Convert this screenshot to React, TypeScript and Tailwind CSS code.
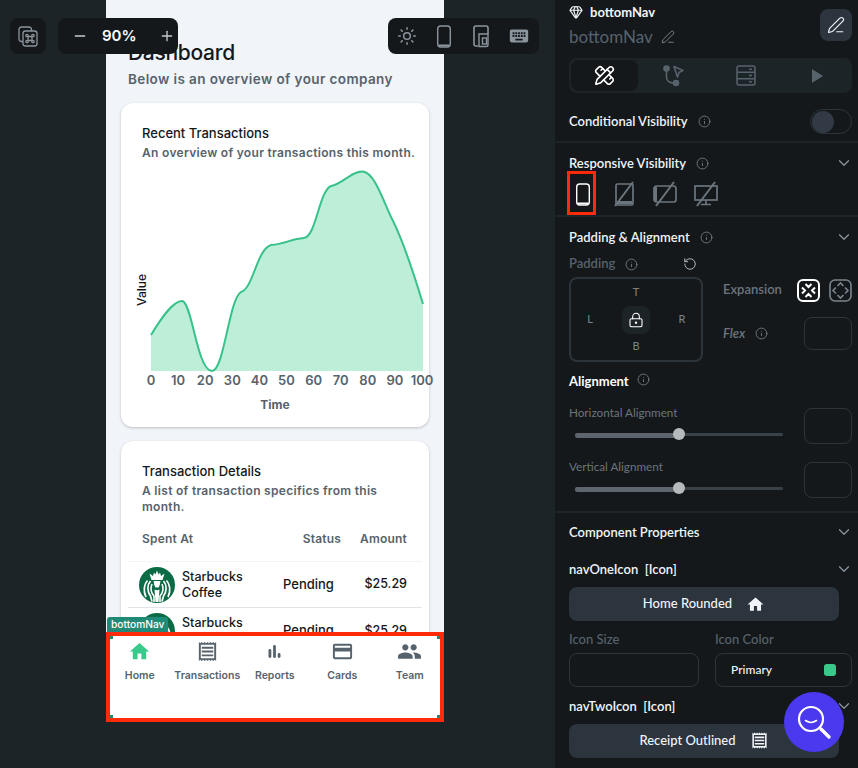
import { ChevronDown, Gem, Info, LockKeyhole, Minus, PencilRuler, PenLine, Plus, RotateCcw, Sun } from 'lucide-react';
import { MdCreditCard, MdHome, MdKeyboard, MdOutlineReceipt, MdPeople, MdPlayArrow } from 'react-icons/md';
import type { ReactNode } from 'react';

const NAV_ITEMS = [
  { label: 'Home', icon: <MdHome size={23} />, active: true },
  { label: 'Transactions', icon: <MdOutlineReceipt size={23} /> },
  { label: 'Reports', icon: <BarsIcon /> },
  { label: 'Cards', icon: <MdCreditCard size={23} /> },
  { label: 'Team', icon: <MdPeople size={25} /> },
];

const TICKS = [0, 10, 20, 30, 40, 50, 60, 70, 80, 90, 100];

const LINE =
  'M30 164 C41 146 52 130 61 130 C71 130 76 200 91 200 C103 200 108 128 120 121 C132 118 136 78 150 74 C164 73 170 68 183 67 C195 66 198 20 210 15 C222 13 230 0 242 0.5 C254 2 262 30 272 50 C282 70 292 100 302 133';

function BarsIcon() {
  return (
    <svg width="23" height="23" viewBox="0 0 23 23" fill="currentColor">
      <rect x="5.5" y="9" width="2.8" height="9" rx="1.4" />
      <rect x="10.1" y="5" width="2.8" height="13" rx="1.4" />
      <rect x="14.7" y="13" width="2.8" height="5" rx="1.4" />
    </svg>
  );
}

function PhoneGlyph({ className }: { className?: string }) {
  return (
    <svg width="18" height="25" viewBox="0 0 18 25" fill="none" stroke="currentColor" strokeWidth="1.4" className={className}>
      <rect x="2.7" y="2" width="12.6" height="21" rx="3" />
      <path d="M3.5 21.4 H14.5" strokeWidth="1.8" />
    </svg>
  );
}

function TabletGlyph() {
  return (
    <svg width="18" height="24" viewBox="0 0 18 24" fill="none" stroke="currentColor" strokeWidth="1.6">
      <path d="M6 22 H4 a2 2 0 0 1 -2 -2 V4 a2 2 0 0 1 2 -2 H14 a2 2 0 0 1 2 2 V10" />
      <path d="M7 10 H16 V21 a1.5 1.5 0 0 1 -1.5 1.5 H7 Z" strokeWidth="1.4" />
      <rect x="10.5" y="14" width="4" height="6" strokeWidth="1.4" />
    </svg>
  );
}

function FlowGlyph() {
  return (
    <svg width="22" height="22" viewBox="0 0 22 22" fill="none" stroke="currentColor" strokeWidth="1.6">
      <circle cx="3.5" cy="3.5" r="2.5" fill="currentColor" />
      <circle cx="13" cy="18" r="2.5" fill="currentColor" />
      <path d="M3.5 5 V12 C3.5 16 7 18 11 18" />
      <path d="M11 1.5 L20 5.5 L16 7.5 L14.5 12 Z" strokeLinejoin="round" />
    </svg>
  );
}

function ServerGlyph() {
  return (
    <svg width="20" height="21" viewBox="0 0 20 21" fill="none" stroke="currentColor" strokeWidth="1.5">
      <rect x="1" y="1" width="18" height="19" rx="2" />
      <path d="M1 7.3 H19 M1 13.7 H19" />
      <path d="M13 4.2 H16 M13 10.5 H16 M13 16.8 H16" />
    </svg>
  );
}

function CommandStack() {
  return (
    <svg width="20" height="21" viewBox="0 0 20 21" fill="none" stroke="#8b959e" strokeWidth="1.3">
      <path d="M5 15.5 H3.5 a2.5 2.5 0 0 1 -2.5 -2.5 V3.5 A2.5 2.5 0 0 1 3.5 1 H11 a2.5 2.5 0 0 1 2.5 2.5 V5" />
      <rect x="5" y="5" width="14" height="15" rx="2.5" />
      <path d="M10 10 V15 M14 10 V15 M10 10.5 H14 M10 14.5 H14" />
      <circle cx="9" cy="9.5" r="1.2" />
      <circle cx="15" cy="9.5" r="1.2" />
      <circle cx="9" cy="15.5" r="1.2" />
      <circle cx="15" cy="15.5" r="1.2" />
    </svg>
  );
}

function HiddenDevice({ kind }: { kind: 'tablet' | 'landscape' | 'desktop' }) {
  return (
    <svg width="26" height="26" viewBox="0 0 26 26" fill="none" stroke="#6b757e" strokeWidth="1.7">
      {kind === 'tablet' && <rect x="5" y="3" width="17" height="21" rx="1.5" />}
      {kind === 'tablet' && <path d="M6 21.5 H21" strokeWidth="3" />}
      {kind === 'landscape' && <rect x="2" y="5" width="22" height="16" rx="2.5" />}
      {kind === 'landscape' && <path d="M3.5 6 V20" strokeWidth="3" />}
      {kind === 'desktop' && <rect x="2" y="5" width="22" height="14" />}
      {kind === 'desktop' && <path d="M13 19 V23 M8 23.5 H18" />}
      <path d="M4 25 L22 1" strokeWidth="2" />
    </svg>
  );
}

function ExpandGlyph({ inward }: { inward?: boolean }) {
  return (
    <svg
      width="23"
      height="23"
      viewBox="0 0 23 23"
      fill="none"
      stroke={inward ? '#ffffff' : '#7b858e'}
      strokeWidth={inward ? 2 : 1.6}
    >
      <rect x="1" y="1" width="21" height="21" rx="5" />
      {inward ? (
        <path d="M8.5 5 L11.5 8 L14.5 5 M8.5 18 L11.5 15 L14.5 18 M5 8.5 L8 11.5 L5 14.5 M18 8.5 L15 11.5 L18 14.5" />
      ) : (
        <path d="M8.5 7 L11.5 4 L14.5 7 M8.5 16 L11.5 19 L14.5 16 M7 8.5 L4 11.5 L7 14.5 M16 8.5 L19 11.5 L16 14.5" />
      )}
    </svg>
  );
}

function StarbucksLogo() {
  return (
    <svg width="36" height="36" viewBox="0 0 36 36" className="shrink-0">
      <circle cx="18" cy="18" r="18" fill="#0b6b45" />
      {/* crown */}
      <path d="M10.5 6.5 L14 9 L15 5.5 L16.5 7.5 L18 3.5 L19.5 7.5 L21 5.5 L22 9 L25.500 6.5 L23.500 13 H12.500 Z" fill="#ffffff" />
      {/* face */}
      <path d="M14.500 14 H21.500 L21 19 C20 21 16 21 15 19 Z" fill="#ffffff" />
      <path d="M14 14 C12.500 17 13 21 15 23 L16 20 Z M22 14 C23.500 17 23 21 21 23 L20 20 Z" fill="#0b6b45" />
      {/* body */}
      <path d="M15.500 22.500 C17 23.500 19 23.500 20.500 22.500 L19.500 35 H16.500 Z" fill="#ffffff" />
      {/* tails */}
      <path d="M11.500 14 C8 18 8 24 11.500 29 L13 34.500 M8.500 13.500 C5 17 4 24 7 30 M24.500 14 C28 18 28 24 24.500 29 L23 34.500 M27.500 13.500 C31 17 32 24 29 30" fill="none" stroke="#ffffff" strokeWidth="1.7" />
      <path d="M13 17 C11 21 12 26 15 29 L15 35 M23 17 C25 21 24 26 21 29 L21 35" fill="none" stroke="#ffffff" strokeWidth="1.6" />
    </svg>
  );
}

function Chart() {
  return (
    <svg width="308" height="260" viewBox="0 0 308 260" className="block overflow-visible">
      <g transform="translate(0 10)">
        <path d={`${LINE} V200 H30 Z`} fill="#bdeed8" />
        <path d={LINE} fill="none" stroke="#39c18a" strokeWidth="2" />
      </g>
      <text
        transform="translate(25 129) rotate(-90)"
        fontSize="12"
        fontWeight="500"
        fill="#14181b"
        textAnchor="middle"
      >
        Value
      </text>
      {TICKS.map((t, i) => (
        <text key={t} x={30 + i * 27.1} y="224" fontSize="13" fontWeight="600" fill="#57636c" textAnchor="middle">
          {t}
        </text>
      ))}
      <text x="154" y="248" fontSize="12" fontWeight="700" fill="#57636c" textAnchor="middle">
        Time
      </text>
    </svg>
  );
}

function TxRow({ border }: { border?: boolean }) {
  return (
    <div className={`flex h-[46px] items-center pl-[11px] pr-[15px] ${border ? 'border-b border-[#e0e3e7]' : ''}`}>
      <StarbucksLogo />
      <div className="ml-[7px] w-[101px] text-[12.5px] leading-[16px] font-medium text-[#14181b]">
        Starbucks
        <br />
        Coffee
      </div>
      <div className="w-[75px] text-[13px] font-medium text-[#14181b]">Pending</div>
      <div className="ml-auto text-[12.5px] font-medium text-[#14181b]">$25.29</div>
    </div>
  );
}

function Phone() {
  return (
    <div className="flex h-[722px] w-[338px] flex-col bg-[#f1f4f8]" style={{ fontFamily: 'Inter, sans-serif' }}>
      <div className="h-[632px] overflow-hidden">
        <div className="pl-[22px] pt-[38px]">
          <div className="text-[21px] leading-[30px] font-medium tracking-[-0.3px] text-[#14181b]">Dashboard</div>
          <div className="mt-[2px] text-[13.5px] leading-[18px] font-semibold tracking-[0.4px] text-[#57636c]">
            Below is an overview of your company
          </div>
        </div>
        <div className="mx-[15px] mt-[15px] h-[324px] rounded-xl bg-white shadow-[0_1px_3px_rgba(0,0,0,0.22)]">
          <div className="px-[21px] pt-[22px]">
            <div className="text-[13px] leading-[16px] font-medium text-[#14181b]">Recent Transactions</div>
            <div className="mt-[4px] text-[12px] leading-[16px] font-semibold tracking-[0.3px] whitespace-nowrap text-[#57636c]">
              An overview of your transactions this month.
            </div>
          </div>
          <Chart />
        </div>
        <div className="mx-[15px] mt-[14px] h-[230px] rounded-xl bg-white shadow-[0_1px_3px_rgba(0,0,0,0.22)]">
          <div className="px-[21px] pt-[22px]">
            <div className="text-[13px] leading-[16px] font-medium text-[#14181b]">Transaction Details</div>
            <div className="mt-[4px] text-[12px] leading-[16px] font-semibold tracking-[0.3px] text-[#57636c]">
              A list of transaction specifics from this month.
            </div>
            <div className="mt-[15px] flex text-[12px] font-semibold tracking-[0.2px] text-[#57636c]">
              <span className="flex-1">Spent At</span>
              <span className="mr-[19px]">Status</span>
              <span className="mr-[1px]">Amount</span>
            </div>
          </div>
          <div className="mx-[7px] mt-[13px] border-t border-[#f1f4f8]">
            <TxRow border />
            <TxRow />
          </div>
        </div>
      </div>
      <div className="relative flex h-[90px] bg-white">
        {NAV_ITEMS.map((item) => (
          <div key={item.label} className="flex w-[67.5px] flex-col items-center pt-[7px]">
            <div className={`flex h-[24px] items-center ${item.active ? 'text-[#39c98a]' : 'text-[#57636c]'}`}>
              {item.icon}
            </div>
            <span className="mt-[6px] text-[10.5px] leading-[14px] font-semibold whitespace-nowrap text-[#57636c]">
              {item.label}
            </span>
          </div>
        ))}
        <div className="absolute inset-0 border-4 border-[#ff2a0a]" />
        <span className="absolute top-[4px] left-[4px] h-[3px] w-[3px] bg-[#1f8a78]" />
        <span className="absolute top-[4px] right-[4px] h-[3px] w-[3px] bg-[#1f8a78]" />
        <span className="absolute bottom-[4px] left-[4px] h-[3px] w-[3px] bg-[#1f8a78]" />
        <span className="absolute right-[4px] bottom-[4px] h-[3px] w-[3px] bg-[#1f8a78]" />
        <div className="absolute top-[-15px] left-[1px] h-[15px] rounded-t-[3px] bg-[#1f8a78] px-[4px] text-[10.2px] leading-[15px] font-medium text-white">
          bottomNav
        </div>
      </div>
    </div>
  );
}

function InfoDot({ className }: { className?: string }) {
  return <Info size={13} strokeWidth={1.5} className={`text-[#7b858e] ${className ?? ''}`} />;
}

function SectionHead({ title, info, chevron = true }: { title: string; info?: boolean; chevron?: boolean }) {
  return (
    <div className="flex items-center text-[13px] leading-[18px] font-semibold whitespace-pre text-[#f1f4f8]">
      <span>{title}</span>
      {info && <InfoDot className="ml-[10px]" />}
      {chevron && <ChevronDown size={18} strokeWidth={1.6} className="ml-auto mr-[-1px] text-[#8b959e]" />}
    </div>
  );
}

function ValueBox({ className }: { className?: string }) {
  return <div className={`rounded-lg border border-[#2c343b] ${className ?? ''}`} />;
}

function SliderRow({ label }: { label: string }) {
  return (
    <div className="mt-[18px] flex justify-between">
      <div className="w-[214px]">
        <div className="mt-[-4px] text-[11.7px] leading-[16px] text-[#6b757e]">{label}</div>
        <div className="relative mt-[14px] ml-[6px] h-[3px] w-[208px] rounded-full bg-[#3a4249]">
          <div className="mt-[-1px] h-[5px] w-[104px] rounded-full bg-[#5d666e]" />
          <div className="absolute top-[-5px] left-[98px] h-[12px] w-[12px] rounded-full bg-[#b5babd]" />
        </div>
      </div>
      <ValueBox className="h-[36px] w-[48px]" />
    </div>
  );
}

function IconButton({ label, children }: { label: string; children: ReactNode }) {
  return (
    <div className="mr-[13px] flex h-[34px] items-center justify-center gap-[14px] rounded-lg bg-[#2c353d] text-[13px] font-medium text-[#f1f4f8]">
      <span>{label}</span>
      {children}
    </div>
  );
}

function Panel() {
  return (
    <div className="h-[768px] w-[303px] overflow-hidden bg-[#14181b] text-[#f1f4f8]" style={{ fontFamily: 'Lato, sans-serif' }}>
      <div className="h-[143px] border-b-2 border-[#1d2428] px-[14px] pr-[6px] pt-[4px]">
        <div className="flex justify-between pr-0">
          <div>
            <div className="flex items-center gap-[7px] text-[13px] leading-[16px] font-bold">
              <Gem size={14} strokeWidth={2} />
              bottomNav
            </div>
            <div className="mt-[6px] flex items-center gap-[8px] text-[17px] leading-[22px] text-[#57636c]">
              bottomNav
              <PenLine size={14} strokeWidth={1.4} className="text-[#8b959e]" />
            </div>
          </div>
          <div className="mt-[5px] flex h-[32px] w-[32px] items-center justify-center rounded-lg bg-[#2c353d]">
            <PenLine size={18} strokeWidth={1.6} />
          </div>
        </div>
        <div className="mt-[10px] flex h-[35px] w-[283px] items-center rounded-lg bg-[#1d2428] p-[2px] text-[#57636c]">
          <div className="flex h-[31px] w-[67px] items-center justify-center rounded-lg bg-[#14181b] text-white">
            <PencilRuler size={21} strokeWidth={1.8} />
          </div>
          <div className="flex w-[72px] justify-center"><FlowGlyph /></div>
          <div className="flex w-[72px] justify-center"><ServerGlyph /></div>
          <div className="flex w-[68px] justify-center"><MdPlayArrow size={24} /></div>
        </div>
        <div className="mt-[16px] flex h-[25px] items-center pr-0 text-[13px] font-semibold">
          <span>Conditional Visibility</span>
          <InfoDot className="ml-[10px]" />
          <div className="ml-auto flex h-[25px] w-[42px] items-center rounded-full border border-[#2c343b] pl-[1px]">
            <div className="h-[22px] w-[22px] rounded-full bg-[#323b45]" />
          </div>
        </div>
      </div>

      <div className="h-[74px] border-b-2 border-[#1d2428] pl-[14px] pr-[6px] pt-[11px]">
        <SectionHead title="Responsive Visibility" info />
        <div className="relative mt-[7px] flex h-[30px] items-center gap-[15px] pl-0">
          <div className="ml-[1px] flex h-[26px] w-[26px] items-center justify-center text-white"><PhoneGlyph /></div>
          <HiddenDevice kind="tablet" />
          <HiddenDevice kind="landscape" />
          <HiddenDevice kind="desktop" />
          <div className="absolute top-[-8px] left-[-2px] h-[44px] w-[29px] border-[3px] border-[#ff2a0a]" />
        </div>
      </div>

      <div className="h-[296px] border-b-2 border-[#1d2428] pl-[14px] pr-[6px] pt-[11px]">
        <SectionHead title="Padding & Alignment" info />
        <div className="mt-[10px] flex h-[16px] w-[134px] items-center text-[13px] font-semibold text-[#57636c]">
          <span>Padding</span>
          <InfoDot className="ml-[10px]" />
          <RotateCcw size={14} strokeWidth={1.5} className="ml-auto mr-[6px] text-[#c5c9cc]" />
        </div>
        <div className="mt-[5px] flex">
          <div className="grid h-[85px] w-[134px] grid-cols-[38px_1fr_38px] grid-rows-3 place-items-center rounded-lg border-2 border-[#2c343b] text-[11px] text-[#7b858e]">
            <span className="col-start-2">T</span>
            <span className="col-start-1 row-start-2">L</span>
            <div className="col-start-2 row-start-2 flex h-[28px] w-[28px] items-center justify-center rounded-lg bg-[#1d2428] text-white">
              <LockKeyhole size={16} strokeWidth={1.6} />
            </div>
            <span className="col-start-3 row-start-2">R</span>
            <span className="col-start-2 row-start-3">B</span>
          </div>
          <div className="ml-[20px] w-[129px]">
            <div className="flex h-[26px] items-center text-[13px] font-semibold text-[#6b757e]">
              <span>Expansion</span>
              <div className="ml-auto flex gap-[9px]">
                <ExpandGlyph inward />
                <ExpandGlyph />
              </div>
            </div>
            <div className="mt-[14px] flex items-center text-[13px] font-semibold text-[#6b757e] italic">
              <span>Flex</span>
              <InfoDot className="ml-[10px]" />
              <ValueBox className="ml-auto h-[33px] w-[48px]" />
            </div>
          </div>
        </div>
        <div className="mt-[10px] flex items-center text-[13px] leading-[18px] font-bold text-white">
          Alignment
          <InfoDot className="ml-[8px] mb-[4px]" />
        </div>
        <SliderRow label="Horizontal Alignment" />
        <SliderRow label="Vertical Alignment" />
      </div>

      <div className="pl-[14px] pr-[6px] pt-[10px]">
        <SectionHead title="Component Properties" />
        <div className="mt-[19px]"><SectionHead title="navOneIcon  [Icon]" /></div>
        <div className="mt-[9px]">
          <IconButton label="Home Rounded"><MdHome size={19} /></IconButton>
        </div>
        <div className="mt-[9px] flex gap-[16px] text-[13px] font-medium text-[#57636c]">
          <div className="w-[130px]">
            Icon Size
            <ValueBox className="mt-[3px] h-[34px]" />
          </div>
          <div className="w-[137px]">
            Icon Color
            <div className="mt-[3px] flex h-[34px] items-center justify-between rounded-lg border border-[#2c343b] pl-[15px] pr-[15px] text-[12px] text-[#f1f4f8]">
              Primary
              <span className="h-[12px] w-[12px] rounded-[3px] bg-[#39c98a]" />
            </div>
          </div>
        </div>
        <div className="mt-[10px]"><SectionHead title="navTwoIcon  [Icon]" /></div>
        <div className="mt-[9px]">
          <IconButton label="Receipt Outlined"><MdOutlineReceipt size={19} /></IconButton>
        </div>
      </div>
    </div>
  );
}

export default function App() {
  return (
    <div className="relative flex h-[768px] w-[858px] overflow-hidden bg-[#1d2428]">
      <div className="w-[555px] pl-[106px]">
        <Phone />
      </div>
      <Panel />

      <div className="absolute top-[18px] left-[10px] flex h-[36px] w-[36px] items-center justify-center rounded-lg bg-[#14181b]">
        <CommandStack />
      </div>
      <div
        className="absolute top-[18px] left-[58px] flex h-[36px] w-[120px] items-center gap-[14px] rounded-lg bg-[#14181b] pl-[14px] text-[15px] font-semibold text-white"
        style={{ fontFamily: 'Inter, sans-serif' }}
      >
        <Minus size={16} strokeWidth={2} className="text-[#c5c9cc]" />
        <span>90%</span>
        <Plus size={16} strokeWidth={2} className="ml-[8px] text-[#c5c9cc]" />
      </div>
      <div className="absolute top-[18px] left-[388px] flex h-[36px] w-[151px] items-center justify-between rounded-lg bg-[#14181b] px-[9px] text-[#8b959e]">
        <Sun size={20} strokeWidth={1.8} />
        <PhoneGlyph />
        <TabletGlyph />
        <MdKeyboard size={22} />
      </div>

      <div className="absolute top-[692px] left-[784px] flex h-[60px] w-[60px] items-center justify-center rounded-full bg-[#4b39ef]">
        <svg width="38" height="38" viewBox="0 0 38 38" fill="none" stroke="#ffffff" strokeWidth="2.2" strokeLinecap="round">
          <circle cx="16" cy="16" r="12" />
          <path d="M10.5 17.5 C14 20 18 20 21.5 17.5" strokeWidth="1.6" />
          <path d="M26 26 L34 34" strokeWidth="3.4" />
        </svg>
      </div>
    </div>
  );
}
